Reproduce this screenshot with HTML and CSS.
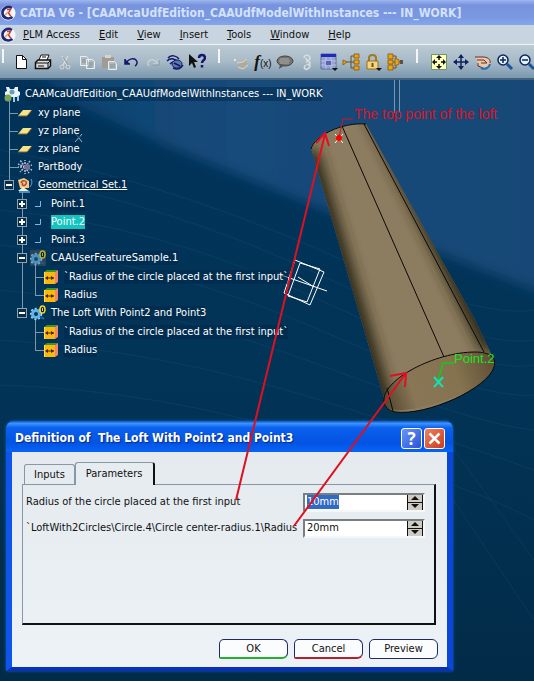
FILE: index.html
```html
<!DOCTYPE html>
<html lang="en">
<head>
<meta charset="utf-8">
<title>CATIA V6</title>
<link rel="stylesheet" href="styles.css">
</head>
<body>
<svg class="defs" aria-hidden="true">
  <defs>
    <symbol id="logo" viewBox="0 0 16 16"><circle cx="8" cy="8" r="7.6" fill="#f4f6fc"/><path d="M12 3C7 0 2 4 2.500 8.500S8 15 12.500 12" fill="none" stroke="#1d2878" stroke-width="2.600"/><path d="M7 4.500h3.500L8.500 8 11 11.500" fill="none" stroke="#d63a2a" stroke-width="1.500"/><path d="M5 10l3-3" stroke="#e8a33d" stroke-width="1.500"/></symbol>
    <symbol id="plane" viewBox="0 0 16 16"><path d="M6 5h9l-5 6H1z" fill="#f7e48a"/><path d="M1 11h9l5-6" fill="none" stroke="#7b6230"/></symbol>
    <symbol id="corner" viewBox="0 0 16 16"><path d="M10.500 5v5.500H5" fill="none" stroke="#7ab6ee"/></symbol>
    <symbol id="param" viewBox="0 0 16 16"><path d="M1 3l3-2h11l-3 2z" fill="#37992c"/><path d="M12 3l3-2v12l-3 2z" fill="#f08672"/><path d="M1 3h11v12H1z" fill="#fbb80f"/><path d="M1.500 15V3" stroke="#ffdf55"/><path d="M3 9h8" stroke="#4a2500"/><path d="M2 9l3-2v4zM11 9l-3-2v4z" fill="#4a2500"/></symbol>
    <symbol id="feature" viewBox="0 0 16 16"><circle cx="6" cy="9" r="3.500" fill="none" stroke="#62b4e8" stroke-width="3"/><circle cx="6" cy="9" r="5.500" fill="none" stroke="#9bd8fa" stroke-width="1.500" stroke-dasharray="2 2"/><ellipse cx="12.500" cy="4.500" rx="2.500" ry="3.500" fill="#111" stroke="#f0dc22" stroke-width="1.500"/><path d="M12.500 3v3" stroke="#f0dc22"/><path d="M11 12l3 2" stroke="#2b68a8" stroke-width="2"/></symbol>
  </defs>
</svg>
<header class="app-header">
  <div class="titlebar"><svg class="logo"><use href="#logo"/></svg><h1>CATIA V6 - [CAAMcaUdfEdition_CAAUdfModelWithInstances --- IN_WORK]</h1></div>
  <nav class="menubar">
    <svg class="logo"><use href="#logo"/></svg>
    <button><u>P</u>LM Access</button><button><u>E</u>dit</button><button><u>V</u>iew</button><button><u>I</u>nsert</button><button><u>T</u>ools</button><button><u>W</u>indow</button><button><u>H</u>elp</button>
  </nav>
  <div class="toolbar" role="toolbar">
    <span class="grip first"></span>
    <button aria-label="New"><svg viewBox="0 0 18 18"><path d="M4.500 2.500h6l4 4v9h-10z" fill="#fff" stroke="#111"/><path d="M10.500 2.500v4h4" fill="none" stroke="#111"/></svg></button>
    <button aria-label="Print"><svg viewBox="0 0 18 18"><path d="M5 7l2-5h8l-2 5" fill="#fff" stroke="#111"/><path d="M1.500 9.500L4 7h12.500v6L14 15.500H1.500z" fill="#ddd" stroke="#111" stroke-width="1.500"/><path d="M2 10h12v5M14 10l2-2M4 13h6M8 4h4" fill="none" stroke="#111"/></svg></button>
    <button aria-label="Cut"><svg viewBox="0 0 18 18" fill="none" stroke="#d5dada"><path d="M6 3l5 9M12 3L7 12" stroke-width="1.500"/><circle cx="6" cy="14" r="2"/><circle cx="12" cy="14" r="2"/><path d="M7 4l5 8" stroke="#8f9897"/></svg></button>
    <button aria-label="Copy"><svg viewBox="0 0 18 18"><path d="M2.500 3.500h6l2 2v7h-8zM8.500 6.500h6l2 2v7h-8z" fill="#aebabf" stroke="#e8eded"/><path d="M4 7h4M4 9h4M10 10h5M10 12h5M10 14h4" stroke="#858f92"/></svg></button>
    <button aria-label="Paste"><svg viewBox="0 0 18 18"><path d="M2 4h12v11H2z" fill="#a19b91"/><path d="M5 2h6v3H5z" fill="#d7d5cb"/><path d="M8.500 8.500h6l2 2v6h-8z" fill="#aebabf" stroke="#e8eded"/><path d="M10 12h5M10 14h5" stroke="#858f92"/></svg></button>
    <button aria-label="Undo"><svg viewBox="0 0 18 18"><path d="M3 6v5h5M4 10c3-5 8-5 10-3s1 5-1 6" fill="none" stroke="#16166b" stroke-width="1.500"/><path d="M3 6v5h5z" fill="#16166b"/></svg></button>
    <button aria-label="Redo"><svg viewBox="0 0 18 18"><path d="M14 6v5H9M13 10c-2-4-6-4-8-2s-1 4 0 5" fill="none" stroke="#c8d1d3" stroke-width="1.500"/><path d="M15 7v5H9" fill="none" stroke="#87949c"/></svg></button>
    <button aria-label="Update"><svg viewBox="0 0 18 18" fill="none" stroke="#16166b"><path d="M2 5c3-4 9-2 11 1M1 8c4-4 9-2 12 2M4 11c3-3 7-3 10 0" stroke-width="1.500"/><ellipse cx="11" cy="11" rx="5" ry="4" fill="#557eaa"/><path d="M7 15c4 2 8 1 10-3M8 10l6 3" stroke-width="1.500"/></svg></button>
    <button aria-label="What's this"><svg viewBox="0 0 18 18"><path d="M1 1v12l3-3 2 5 2-1-2-5h4z" fill="#111"/><path d="M11 5c0-4 6-4 6 0 0 2-3 2-3 5M14 12v2.500" fill="none" stroke="#16166b" stroke-width="2.500"/></svg></button>
    <span class="grip"></span>
    <button aria-label="Apply"><svg viewBox="0 0 18 18"><path d="M6 10l5-2 5-3-2 4 2 2-6 5-4-2z" fill="#b1aa9a"/><path d="M5 10l6-1 4-3M6 14l5 2 5-4" fill="none" stroke="#d9dad2"/><path d="M2 7h2" stroke="#e3e8e8" stroke-width="2"/></svg></button>
    <button aria-label="Formula" class="formula">f<small>(x)</small></button>
    <button aria-label="Comment"><svg viewBox="0 0 18 18"><ellipse cx="9" cy="8" rx="8" ry="5" fill="#74746e" stroke="#444"/><path d="M4 11l-1 5 6-4z" fill="#555"/><path d="M4 6h9M3 8h11M4 10h9" stroke="#aaa"/></svg></button>
    <button aria-label="Link"><svg viewBox="0 0 18 18" fill="none" stroke="#d8dedf" stroke-width="1.500"><path d="M6 5c0-4 6-3 6 0s-4 3-4 0M8 9c5-2 5 3 2 3M8 12c-4 3 0 6 3 3s-1-5-2-3"/></svg></button>
    <button aria-label="Design table"><svg viewBox="0 0 18 18"><path d="M1 1h15v15H1z" fill="#99a3cf" stroke="#596aa7"/><path d="M1 1h15v3H1z" fill="#1b2bc0"/><path d="M1 8h15M1 12h15M6 4v12M11 4v12" stroke="#b9c1e3"/><path d="M6 8h5v4H6z" fill="#5466b8"/><path d="M12 15h6l-3 3z" fill="#111"/></svg></button>
    <button aria-label="Split"><svg viewBox="0 0 18 18"><path d="M4 9h5M13 3H9v12h4M9 9h4" fill="none" stroke="#5d5130"/><path d="M1 7l4 2-4 3zM12 1h5v4h-5zM12 7h5v4h-5zM12 13h5v4h-5z" fill="#eba414" stroke="#936512"/></svg></button>
    <button aria-label="Lock"><svg viewBox="0 0 18 18"><path d="M5 8V5c0-4 7-4 7 0v3" fill="none" stroke="#9e7a25" stroke-width="2"/><path d="M3 8h11v8H3z" fill="#f4d583" stroke="#a06d16"/><path d="M8.500 10v4" stroke="#6e5018" stroke-width="2"/><path d="M12 15h6l-3 3z" fill="#111"/></svg></button>
    <button aria-label="Structure"><svg viewBox="0 0 18 18"><path d="M6 3h4v12H6M6 9h10" fill="none" stroke="#5d5130"/><path d="M2 1h5v5H2zM2 7h5v4H2zM2 12h5v5H2zM9 5l4 2v4l-4 2z" fill="#eba414" stroke="#936512"/><path d="M14 7h3v4h-3z" fill="#56544a"/></svg></button>
    <span class="grip"></span>
    <button aria-label="Fit all"><svg viewBox="0 0 18 18"><path d="M1.500 1.500h15v15h-15z" fill="#ffffc0" stroke="#6f9668"/><path d="M9 3v4M9 11v4M3 9h4M11 9h4" stroke="#111" stroke-width="1.500"/><path d="M9 2L6 5h6zM9 16l-3-3h6zM2 9l3-3v6zM16 9l-3-3v6z" fill="#111"/></svg></button>
    <button aria-label="Pan"><svg viewBox="0 0 18 18"><path d="M9 2v14M2 9h14" stroke="#10235e" stroke-width="1.500"/><path d="M9 1L6 5h6zM9 17l-3-4h6zM1 9l4-3v6zM17 9l-4-3v6z" fill="#10235e"/></svg></button>
    <button aria-label="Rotate"><svg viewBox="0 0 18 18"><path d="M2 4h8l6 3v6l-6 2-6-3z" fill="#edc7a7"/><path d="M1 4h8c4 0 8 2 7 6M3 7h7l3 3H7M4 10v3l5 2" fill="none" stroke="#5f3030"/><path d="M7 15c4 2 8 0 9-4" fill="none" stroke="#2370b3" stroke-width="2"/></svg></button>
    <button aria-label="Zoom in"><svg viewBox="0 0 18 18"><circle cx="7" cy="7" r="5" fill="#dff3fa" stroke="#10235e" stroke-width="1.500"/><path d="M4 7h6M7 4v6" stroke="#10235e" stroke-width="1.500"/><path d="M11 11l5 5" stroke="#1c519b" stroke-width="3"/></svg></button>
    <button aria-label="Zoom out"><svg viewBox="0 0 18 18"><circle cx="7" cy="7" r="5" fill="#dff3fa" stroke="#10235e" stroke-width="1.500"/><path d="M4 7h6" stroke="#10235e" stroke-width="1.500"/><path d="M11 11l5 5" stroke="#1c519b" stroke-width="3"/></svg></button>
  </div>
</header>
<main class="viewport">
  <svg class="backdrop" viewBox="0 80 534 601" preserveAspectRatio="none" aria-hidden="true">
    <defs>
      <linearGradient id="deep" x1="0" y1="0" x2="0" y2="1"><stop offset="0" stop-color="#01335a"/><stop offset=".5" stop-color="#023457"/><stop offset="1" stop-color="#022b48"/></linearGradient>
      <linearGradient id="sky" x1="0" y1="0" x2="1" y2="0"><stop offset="0" stop-color="#0a3f6b"/><stop offset=".4" stop-color="#164b7b"/><stop offset="1" stop-color="#154775"/></linearGradient>
      <filter id="soft"><feGaussianBlur stdDeviation="6"/></filter>
    </defs>
    <rect y="80" width="534" height="601" fill="url(#deep)"/>
    <path d="M20 60L80 106L170 147L330 212L450 257L560 300V60z" fill="url(#sky)" filter="url(#soft)"/>
    <g fill="none" stroke="#1c5378" stroke-opacity=".3"><path d="M0 150Q160 180 320 250T534 310"/><path d="M0 175Q160 200 320 275T534 340"/><path d="M0 210Q160 225 320 300T534 365"/><path d="M0 245Q160 260 320 330T534 395"/><path d="M0 290Q160 305 320 365T534 430"/><path d="M0 340Q160 350 320 400T534 470"/><path d="M0 385Q160 390 320 440T534 520"/><path d="M440 430L534 560M440 480L534 620"/></g>
  </svg>
  <svg class="scene" viewBox="0 80 534 601" aria-hidden="true">
    <defs>
      <clipPath id="cone"><path d="M311 148C314 136 342 122 366 124L474 318L495 362C494 386 428 416 395 412C386 411 383 404 384 398z"/></clipPath>
      <linearGradient id="base" x1="384" y1="400" x2="495" y2="360" gradientUnits="userSpaceOnUse"><stop offset="0" stop-color="#52462f"/><stop offset=".25" stop-color="#887656"/><stop offset=".65" stop-color="#85734f"/><stop offset="1" stop-color="#5d4d36"/></linearGradient>
      <filter id="shade" x="-50%" y="-20%" width="200%" height="140%"><feGaussianBlur stdDeviation="7"/></filter>
    </defs>
    <path d="M394.500 80v33M399.500 80v33" stroke="#7897ae"/>
    <g clip-path="url(#cone)">
      <path d="M300 110H500V420H300z" fill="#8d7d60"/>
      <path d="M296 150L370 412L396 412L318 150z" fill="#2c2519" filter="url(#shade)"/>
      <path d="M364 112L482 352L520 350L380 100z" fill="#2c2519" filter="url(#shade)"/>
      <path d="M384 402C381 380 435 352 475 352S505 370 480 385S390 422 384 402z" fill="url(#base)"/>
    </g>
    <g fill="none" stroke="#090806"><path d="M311 149C314 136 342 122 366 124M342 126L444 357M364 124L484 352M384 402C381 380 435 352 475 352C490 352 497 358 494 367C488 388 428 416 395 412Q385 410 384 402M387 388L393 411"/></g>
    <path d="M75 133l7 9M82 134l-7 8" stroke="#9db4c4"/>
    <g fill="none" stroke="#fff"><path d="M295 260L324 272L310 305L284 293z"/><path d="M300 263L320 269L307 302L288 296z"/><path d="M278 274L327 291M298 277L314 287"/></g>
    <path d="M335 134l8 9M343 134l-8 9" stroke="#fff"/>
    <circle cx="339" cy="138" r="3" fill="#f00"/>
    <path d="M339 137L343 119H353" fill="none" stroke="#d01424"/>
    <text class="top-label" x="354" y="119">The top point of the loft</text>
    <path d="M438 381L443 363H454" fill="none" stroke="#12cb16" stroke-width="1.500"/>
    <path d="M434 377l9 10M443 377l-9 10" stroke="#17dfb5" stroke-width="2"/>
    <text class="point-label" x="454" y="363">Point.2</text>
  </svg>
  <section class="tree">
    <div class="row root"><svg class="icon" viewBox="0 0 16 16"><path d="M2 1h3l1 2h4l1-2h3v4l2 1v3l-3 2H4L1 9V6l2-1z" fill="#e9f3f8"/><circle cx="8" cy="6" r="2.500" fill="#6d9cb4"/><circle cx="4" cy="12" r="3.500" fill="#78a653"/><path d="M10 11v5M14 10v5" stroke="#9fc9e5" stroke-width="2"/></svg><span>CAAMcaUdfEdition_CAAUdfModelWithInstances --- IN_WORK</span></div>
    <ul>
      <li><div class="row leaf"><svg class="icon"><use href="#plane"/></svg><span>xy plane</span></div></li>
      <li><div class="row leaf"><svg class="icon"><use href="#plane"/></svg><span>yz plane</span></div></li>
      <li><div class="row leaf"><svg class="icon"><use href="#plane"/></svg><span>zx plane</span></div></li>
      <li><div class="row leaf"><svg class="icon" viewBox="0 0 16 16"><path d="M8 8L1 5M8 8L3 1M8 8V1M8 8l5-6M8 8l7-2M8 8l7 3M8 8l4 6M8 8v7M8 8l-5 5M8 8H1" stroke="#b9c4dc" stroke-width="1.500" stroke-dasharray="2 1"/><circle cx="10" cy="8" r="3" fill="#776c94"/></svg><span>PartBody</span></div></li>
      <li><div class="row"><button class="toggle minus" aria-label="Collapse"></button><svg class="icon" viewBox="0 0 16 16"><path d="M1 3l6-2 5 3v7H3z" fill="#f8c88a"/><path d="M4 6c1-4 7-2 5 1s-5 1-3-1" fill="none" stroke="#a84e20" stroke-width="1.500"/><path d="M1 14l5-4 6 4z" fill="#eef2d2"/><path d="M14 2c2 4 0 6-1 8" fill="none" stroke="#73a9e3"/><path d="M2 15h11" stroke="#468bc8" stroke-width="2"/></svg><span class="active">Geometrical Set.1</span></div>
        <ul>
          <li><div class="row"><button class="toggle plus" aria-label="Expand"></button><svg class="icon"><use href="#corner"/></svg><span>Point.1</span></div></li>
          <li><div class="row"><button class="toggle plus" aria-label="Expand"></button><svg class="icon"><use href="#corner"/></svg><span class="selected">Point.2</span></div></li>
          <li><div class="row"><button class="toggle plus" aria-label="Expand"></button><svg class="icon"><use href="#corner"/></svg><span>Point.3</span></div></li>
          <li><div class="row"><button class="toggle minus" aria-label="Collapse"></button><svg class="icon hidden-feature"><use href="#feature"/></svg><span>CAAUserFeatureSample.1</span></div>
            <ul>
              <li><div class="row leaf"><svg class="icon"><use href="#param"/></svg><span>`Radius of the circle placed at the first input`</span></div></li>
              <li><div class="row leaf"><svg class="icon"><use href="#param"/></svg><span>Radius</span></div></li>
            </ul></li>
          <li><div class="row"><button class="toggle minus" aria-label="Collapse"></button><svg class="icon"><use href="#feature"/></svg><span>The Loft With Point2 and Point3</span></div>
            <ul>
              <li><div class="row leaf"><svg class="icon"><use href="#param"/></svg><span>`Radius of the circle placed at the first input`</span></div></li>
              <li><div class="row leaf"><svg class="icon"><use href="#param"/></svg><span>Radius</span></div></li>
            </ul></li>
        </ul></li>
    </ul>
  </section>
  <section class="dialog" role="dialog" aria-labelledby="dlg-title">
    <header class="dialog-title"><h2 id="dlg-title">Definition of  The Loft With Point2 and Point3</h2>
      <button class="caption help" aria-label="Help">?</button>
      <button class="caption close" aria-label="Close"><svg viewBox="0 0 12 12"><path d="M2 2l8 8M10 2l-8 8" stroke="#fff" stroke-width="2"/></svg></button></header>
    <div class="dialog-body">
      <div class="tabs" role="tablist"><button role="tab">Inputs</button><button role="tab" aria-selected="true" class="current">Parameters</button></div>
      <div class="panel">
        <div class="field"><label for="r1">Radius of the circle placed at the first input</label>
          <div class="spin"><input id="r1" value="10mm"><div class="steps"><button aria-label="Increase"></button><button class="down" aria-label="Decrease"></button></div></div></div>
        <div class="field"><label for="r2">`LoftWith2Circles\Circle.4\Circle center-radius.1\Radius</label>
          <div class="spin"><input id="r2" value="20mm"><div class="steps"><button aria-label="Increase"></button><button class="down" aria-label="Decrease"></button></div></div></div>
      </div>
      <footer class="actions"><button class="ok">OK</button><button class="cancel">Cancel</button><button>Preview</button></footer>
    </div>
  </section>
  <svg class="scene arrows" viewBox="0 80 534 601" aria-hidden="true"><path d="M236 500L325 134M316 143L325 133L329 146M294 526L406 373M390 376L406 373L405 387" fill="none" stroke="#e01020" stroke-width="2"/></svg>
</main>
<script src="main.js"></script>
</body>
</html>
```
FILE: main.js
```js
const firstField = document.getElementById('r1');
firstField.focus();
firstField.select();
```
FILE: styles.css
```css
* { box-sizing: border-box; }
body { margin: 0; min-height: 100vh; display: flex; flex-direction: column; overflow: hidden; font: 11px/14px "DejaVu Sans Condensed", sans-serif; color: #111; }
button, input { font: inherit; color: inherit; margin: 0; padding: 0; border: 0; background: none; }
h1, h2, ul { margin: 0; padding: 0; list-style: none; }
.defs { position: absolute; width: 0; height: 0; }
.logo { width: 16px; height: 16px; flex: none; }

.titlebar { height: 25px; display: flex; align-items: center; gap: 4px; background: linear-gradient(#9db7f0, #7893dd 20%, #7b98e2 70%, #82a8ea); }
.titlebar h1 { font: bold 12px/18px "DejaVu Sans Condensed", sans-serif; color: #d3e2fb; white-space: nowrap; }
.menubar { height: 20px; display: flex; align-items: center; gap: 19px; background: #c8d4df; border-bottom: 1px solid #eef3f6; }
.menubar .logo { margin-right: -12px; }
.menubar button { white-space: nowrap; }
.toolbar { height: 35px; display: flex; align-items: center; overflow: hidden; background: linear-gradient(#bccbd5, #a8bac7 50%, #7b98ae); border-bottom: 2px solid #42627d; }
.toolbar button { width: 22px; height: 22px; flex: none; display: grid; place-items: center; }
.toolbar svg { width: 18px; height: 18px; }
.toolbar .formula { display: block; font: italic bold 17px/20px "Liberation Serif", serif; white-space: nowrap; }
.formula small { font: 10px "Liberation Sans", sans-serif; }
.grip { flex: none; width: 22px; height: 14px; margin-top: -12px; background: linear-gradient(#f4f7f9, #f4f7f9) center / 2px 14px no-repeat; }
.grip.first { width: 10px; background-position: 2px 0; }

.viewport { position: relative; flex: 1; }
.backdrop { position: absolute; inset: 0; width: 100%; height: 100%; }
.scene { position: absolute; left: 0; top: 0; width: 534px; height: 601px; pointer-events: none; }
.arrows { z-index: 3; }
.top-label, .point-label { font: 14px "Liberation Sans", sans-serif; fill: #d81428; }
.point-label { font-size: 13px; fill: #19e51c; }

.tree { position: relative; padding: 5px 0 0 4px; color: #fff; }
.tree ul ul { padding-left: 13px; }
.tree ul { padding-top: 1px; }
.tree li { position: relative; }
.tree li::before { content: ""; position: absolute; left: 5px; top: -3px; bottom: 0; border-left: 1px solid #7d98aa; }
.tree li:last-child::before { bottom: auto; height: 13px; }
.row { height: 18px; display: flex; align-items: center; }
.row.leaf { padding-left: 13px; background: linear-gradient(#7d98aa, #7d98aa) 5px 9px / 9px 1px no-repeat; }
.row span { margin-left: 5px; white-space: nowrap; background: #00284a88; }
.row .active { text-decoration: underline; }
.row .selected { background: #12c5c0; }
.icon { width: 16px; height: 16px; flex: none; position: relative; }
.hidden-feature { background: #394a58; opacity: .75; }
.toggle { position: relative; flex: none; width: 10px; height: 10px; margin-right: 3px; border: 1px solid #8fa3b1; background-color: #082d49; background-repeat: no-repeat; background-position: center; }
.minus { background-image: linear-gradient(#fff, #fff); background-size: 6px 2px; }
.plus { background-image: linear-gradient(#fff, #fff), linear-gradient(#fff, #fff); background-size: 6px 2px, 2px 6px; }

.dialog { position: absolute; left: 6px; top: 341px; width: 447px; border: 6px solid #0a46d8; border-top: 0; border-left-color: #0d55ec; border-bottom: 4px solid #0930bd; border-radius: 8px 8px 0 0; background: #0a50e2; box-shadow: 0 0 3px #1268bc; }
.dialog-title { height: 31px; margin: 0 -6px; padding: 3px 8px 0 9px; display: flex; align-items: center; gap: 2px; border-radius: 8px 8px 0 0; background: linear-gradient(#0d55c8, #3b91ff 8%, #0b60ee 22%, #0453e2 70%, #0664f8); }
.dialog-title h2 { flex: 1; font: bold 12px/18px "DejaVu Sans Condensed", sans-serif; color: #fff; white-space: pre; text-shadow: 1px 1px 1px #0a2a82; }
.caption { width: 21px; height: 21px; display: grid; place-items: center; border: 1px solid #fff; border-radius: 3px; color: #fff; font: bold 17px/19px "Open Sans", sans-serif; }
.caption svg { width: 15px; height: 15px; }
.help { background: linear-gradient(135deg, #6c94f6, #2655d8); }
.close { background: linear-gradient(135deg, #ee8262, #cb3c18); }
.dialog-body { padding: 10px 11px 8px 10px; background: linear-gradient(#e4eaee, #edf2f7); }
.tabs { display: flex; align-items: flex-end; padding-left: 2px; }
.tabs button { height: 20px; padding: 0 9px; border: 1px solid #8797a5; border-bottom: 0; border-radius: 3px 3px 0 0; }
.tabs .current { position: relative; height: 23px; margin-bottom: -1px; padding: 0 11px 0 10px; border-right: 2px solid #111; background: #e6ecf0; }
.panel { height: 141px; padding: 4px 9px 0 3px; border: 1px solid #8797a5; border-right: 2px solid #111; border-bottom: 2px solid #111; }
.field { display: flex; align-items: center; justify-content: space-between; height: 26px; white-space: nowrap; }
.spin { width: 122px; height: 19px; display: flex; border: 2px solid; border-color: #777f83 #f5f8fa #f5f8fa #777f83; background: #fff; }
.spin input { flex: 1; min-width: 0; padding: 0 2px; outline: 0; }
.spin input::selection { background: #316ac5; color: #fff; }
.steps { width: 16px; display: grid; grid-template-rows: 1fr 1fr; background: #111; padding: 0 1px; gap: 1px; }
.steps button { background: #cfcbc2; display: grid; place-items: center; }
.steps button::before { content: ""; border: 4px solid transparent; border-top: 0; border-bottom: 4px solid #111; }
.steps .down::before { border: 4px solid transparent; border-bottom: 0; border-top: 4px solid #111; }
.actions { margin: 14px -2px 0 0; display: flex; justify-content: flex-end; gap: 6px; }
.actions button { width: 69px; height: 20px; border: 1px solid #1d2a6b; border-radius: 5px 6px 6px 2px; background: #fbfcfe; }
.actions .ok { border-bottom: 2px solid #22b033; }
.actions .cancel { border-bottom: 2px solid #b3202c; }
```
